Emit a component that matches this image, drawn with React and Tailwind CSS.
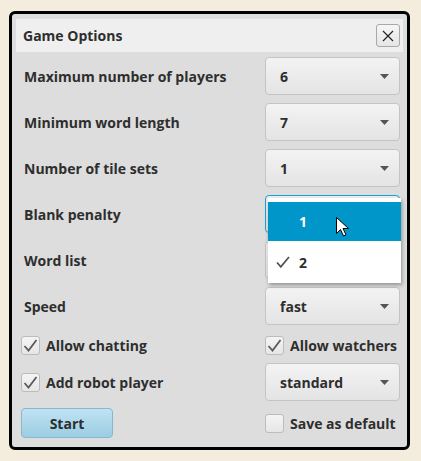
import React from "react";

const font = { fontFamily: '"Open Sans", "Noto Sans", sans-serif' };

const Arrow = () => (
  <svg width="9" height="5" viewBox="0 0 9 5" className="shrink-0">
    <path d="M0 0h9L4.5 5z" fill="#555" />
  </svg>
);

const Combo = ({ value, focus }) => (
  <div
    className={
      "w-[135px] h-[38px] rounded-[4px] border flex items-center justify-between pl-[14px] pr-[10px] bg-gradient-to-b from-[#f3f3f3] to-[#e4e4e4] " +
      (focus ? "border-[#1aa0d4]" : "border-[#c4c4c4]")
    }
  >
    <span className="text-[14px] font-bold text-[#2e2e2e]">{value}</span>
    <Arrow />
  </div>
);

const Check = ({ checked }) => (
  <div className="w-[19px] h-[19px] rounded-[3px] border border-[#bcbcbc] bg-gradient-to-b from-[#f4f4f4] to-[#e6e6e6] flex items-center justify-center">
    {checked && (
      <svg width="15" height="13" viewBox="0 0 15 13">
        <path d="M1.5 7l4 4.5L13.5 1" fill="none" stroke="#5a5a5a" strokeWidth="1.8" />
      </svg>
    )}
  </div>
);

const CheckRow = ({ label, checked }) => (
  <div className="flex items-center gap-[6px]">
    <Check checked={checked} />
    <span className="text-[14px] font-bold text-[#2e2e2e]">{label}</span>
  </div>
);

const rows = [
  { label: "Maximum number of players", value: "6" },
  { label: "Minimum word length", value: "7" },
  { label: "Number of tile sets", value: "1" },
  { label: "Blank penalty", value: "1", focus: true },
  { label: "Word list", value: "2" },
  { label: "Speed", value: "fast" },
];

export default function App() {
  return (
    <div className="w-[421px] h-[461px] bg-[#f4ecdc] pt-[11px] pl-[9px]" style={font}>
      <div className="relative w-[401px] h-[439px] border-[3px] border-black rounded-[6px] bg-[#dddddd] pt-[5px] px-[4px]">
        {/* title */}
        <div className="h-[33px] bg-[#efefef] flex items-center justify-between pl-[7px] pr-[3px]">
          <span className="text-[14px] font-bold text-[#2e2e2e]">Game Options</span>
          <div className="w-[24px] h-[23px] rounded-[3px] border border-[#a8a8a8] bg-gradient-to-b from-[#f6f6f6] to-[#e6e6e6] flex items-center justify-center">
            <svg width="12" height="12" viewBox="0 0 12 12">
              <path d="M1 1l10 10M11 1L1 11" stroke="#222" strokeWidth="1.2" />
            </svg>
          </div>
        </div>

        <div className="pl-[8px] pr-[3px] pt-[5px] flex flex-col">
          <div className="flex flex-col gap-[8px]">
            {rows.map((r) => (
              <div key={r.label} className="flex items-center justify-between">
                <span className="text-[14px] font-bold text-[#2e2e2e]">{r.label}</span>
                <Combo value={r.value} focus={r.focus} />
              </div>
            ))}
          </div>

          <div className="flex items-center justify-between h-[20px] mt-[10px] -ml-[3px]">
            <CheckRow label="Allow chatting" checked />
            <div className="w-[135px]">
              <CheckRow label="Allow watchers" checked />
            </div>
          </div>

          <div className="flex items-center justify-between mt-[8px] -ml-[3px]">
            <CheckRow label="Add robot player" checked />
            <Combo value="standard" />
          </div>

          <div className="flex items-center justify-between mt-[7px] -ml-[3px]">
            <button className="w-[92px] h-[30px] rounded-[4px] border border-[#86b8cf] bg-gradient-to-b from-[#bfe3f3] to-[#9ccde2] text-[14px] font-bold text-[#2e2e2e]">
              Start
            </button>
            <div className="w-[135px]">
              <CheckRow label="Save as default" />
            </div>
          </div>
        </div>

        {/* open popup */}
        <div className="absolute left-[256px] top-[184px] w-[133px] h-[85px] bg-white pt-[4px] shadow-[1px_2px_4px_rgba(0,0,0,0.35)]">
          <div className="h-[39px] bg-[#0096c9] flex items-center pl-[31px]">
            <span className="text-[14px] font-bold text-white">1</span>
          </div>
          <div className="h-[42px] flex items-center pl-[8px] gap-[9px]">
            <svg width="14" height="12" viewBox="0 0 14 12">
              <path d="M1 6.5l3.8 4.3L13 1" fill="none" stroke="#555" strokeWidth="1.8" />
            </svg>
            <span className="text-[14px] font-bold text-[#2e2e2e]">2</span>
          </div>
        </div>

        {/* mouse cursor */}
        <svg className="absolute left-[324px] top-[203px]" width="13" height="20" viewBox="0 0 13 20">
          <path d="M0.5 0.5v16l4-4 3 6.5 2.5-1.2-3-6.3h5.5z" fill="#fff" stroke="#000" strokeWidth="1" />
        </svg>
      </div>
    </div>
  );
}
